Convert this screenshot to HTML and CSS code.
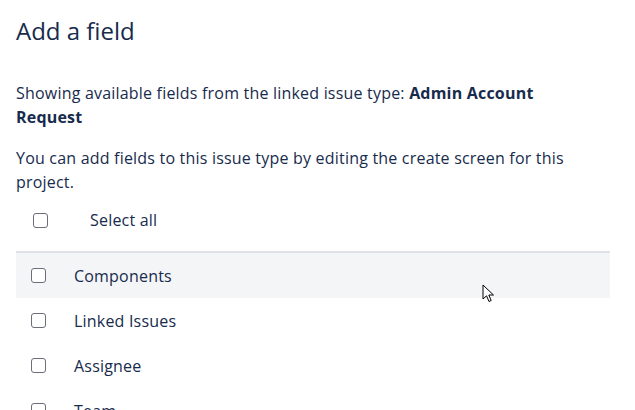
FILE: index.html
```html
<!DOCTYPE html>
<html lang="en">
<head>
    <meta charset="UTF-8">
    <meta name="viewport" content="width=device-width, initial-scale=1.0">
    <title>Add a field</title>
    <link rel="stylesheet" href="styles.css">
</head>
<body>
    <div class="panel">
        <h1 class="title">Add a field</h1>

        <p class="note">Showing available fields from the linked issue type: <strong>Admin Account Request</strong></p>
        <p class="note last">You can add fields to this issue type by editing the create screen for this project.</p>

        <label class="select-all">
            <input type="checkbox" class="check">
            <span>Select all</span>
        </label>

        <ul class="field-list">
            <li class="field-row hover">
                <input type="checkbox" class="check">
                <span>Components</span>
                <svg class="cursor" width="13" height="20" viewBox="0 0 13 20">
                    <path d="M1 1 L1 15 L4.5 11.8 L7 17.5 L9.2 16.5 L6.8 11 L11.5 11 Z" fill="#fff" stroke="#000" stroke-width="1" stroke-linejoin="round"/>
                </svg>
            </li>
            <li class="field-row">
                <input type="checkbox" class="check">
                <span>Linked Issues</span>
            </li>
            <li class="field-row">
                <input type="checkbox" class="check">
                <span>Assignee</span>
            </li>
            <li class="field-row">
                <input type="checkbox" class="check">
                <span>Team</span>
            </li>
        </ul>
    </div>
</body>
</html>
```

FILE: styles.css
```css
body {
    margin: 0;
    font-family: "Open Sans", "Noto Sans", sans-serif;
    color: #172b4d;
    background: #fff;
    overflow: hidden;
}
.panel {
    padding: 0 25px 0 16px;
}
.title {
    font-size: 24px;
    font-weight: 400;
    line-height: 28px;
    margin: 0;
    padding-top: 17px;
    margin-bottom: 36px;
}
.note {
    font-size: 16px;
    line-height: 24px;
    letter-spacing: 0.2px;
    margin: 0 0 17px;
    padding-right: 16px;
}
.note.last {
    margin-bottom: 0;
}
.note strong {
    font-weight: 700;
}
.check {
    appearance: none;
    -webkit-appearance: none;
    width: 15px;
    height: 15px;
    margin: 0;
    border: 1.5px solid #6b6e76;
    border-radius: 3px;
    background: #fff;
    box-sizing: border-box;
    flex: none;
}
.select-all {
    display: flex;
    align-items: center;
    height: 52px;
    padding: 0 0 5px 17px;
    font-size: 16px;
    letter-spacing: 0.2px;
    border-bottom: 2px solid #dfe1e6;
}
.select-all span {
    margin-left: 42px;
}
.field-list {
    list-style: none;
    margin: 0;
    padding: 0;
}
.field-row {
    position: relative;
    display: flex;
    align-items: center;
    height: 45px;
    padding-left: 15px;
    font-size: 16px;
    letter-spacing: 0.2px;
}
.field-row span {
    margin-left: 28px;
}
.field-row.hover {
    background: #f4f5f7;
}
.cursor {
    position: absolute;
    left: 466px;
    top: 31px;
}
```
